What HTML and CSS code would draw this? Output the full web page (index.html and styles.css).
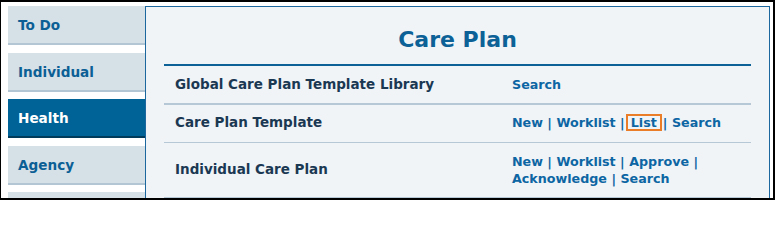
FILE: index.html
```html
<!DOCTYPE html>
<html lang="en">
<head>
<meta charset="utf-8">
<title>Care Plan</title>
<link rel="stylesheet" href="styles.css">
</head>
<body>
<div class="frame">
  <nav class="sidebar">
    <a class="nav-item" href="#">To Do</a>
    <a class="nav-item" href="#">Individual</a>
    <a class="nav-item active" href="#">Health</a>
    <a class="nav-item" href="#">Agency</a>
    <a class="nav-item" href="#"></a>
  </nav>
  <main class="panel">
    <h1 class="title">Care Plan</h1>
    <div class="rows">
      <div class="row row-first">
        <div class="label">Global Care Plan Template Library</div>
        <div class="links"><a href="#">Search</a></div>
      </div>
      <div class="row row-second">
        <div class="label">Care Plan Template</div>
        <div class="links"><a href="#">New</a> | <a href="#">Worklist</a> |<a class="hl" href="#">List</a>| <a href="#">Search</a></div>
      </div>
      <div class="row row-third">
        <div class="label">Individual Care Plan</div>
        <div class="links"><a href="#">New</a> | <a href="#">Worklist</a> | <a href="#">Approve</a> | <a href="#">Acknowledge</a> | <a href="#">Search</a></div>
      </div>
    </div>
  </main>
</div>
</body>
</html>
```
FILE: styles.css
```css
html, body {
  margin: 0;
  padding: 0;
  background: #ffffff;
}

.frame {
  width: 775px;
  height: 200px;
  box-sizing: border-box;
  border-style: solid;
  border-color: #000000;
  border-width: 2px 2px 2px 1px;
  padding: 4px 0 0 7px;
  display: flex;
  align-items: flex-start;
  overflow: hidden;
  background: #ffffff;
  font-family: "DejaVu Sans", Verdana, sans-serif;
  font-weight: bold;
}

.sidebar {
  width: 137px;
  flex: none;
  display: flex;
  flex-direction: column;
}

.nav-item {
  display: block;
  height: 36px;
  padding: 1px 0 0 10px;
  line-height: 37px;
  font-size: 13.6px;
  color: #0b5f95;
  text-decoration: none;
  background: #d6e0e7;
  border-bottom: 2px solid #b3c6d3;
  margin-bottom: 7.5px;
  white-space: nowrap;
}

.nav-item.active {
  background: #006398;
  color: #ffffff;
  border-bottom-color: #003b5c;
}

.panel {
  flex: none;
  width: 587px;
  height: 260px;
  padding: 0 18px;
  background: #f0f4f7;
  border: 1px solid #1c679d;
  border-bottom: none;
}

.title {
  margin: 0;
  padding: 20px 0 11px;
  line-height: 26px;
  font-size: 22px;
  font-weight: bold;
  text-align: center;
  color: #0c6196;
  border-bottom: 2px solid #0c6196;
}

.row {
  display: grid;
  grid-template-columns: 337px 1fr;
  align-items: start;
  border-bottom: 1px solid #b6c8d5;
  line-height: 17.5px;
}

.row-first {
  padding: 10px 0 9.5px;
  border-bottom-width: 2px;
}

.row-second {
  padding: 8.5px 0 10.7px;
}

.row-third {
  padding: 10px 0 8.9px;
}

.row-third .label {
  align-self: center;
}

.label {
  padding-left: 11px;
  font-size: 13.5px;
  color: #1b3853;
}

.links {
  padding-left: 11px;
  font-size: 12.7px;
  color: #0d66a3;
}

.links a {
  color: #0d66a3;
  text-decoration: none;
}

.links a.hl {
  display: inline-block;
  line-height: 13px;
  padding: 0 3px;
  margin: 0 1px 0 1px;
  border: 2px solid #ea7d28;
}
```
